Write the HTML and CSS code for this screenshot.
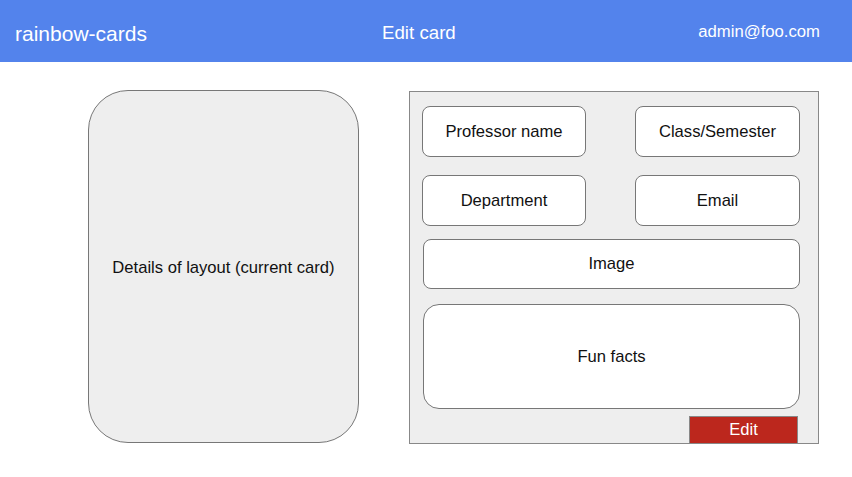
FILE: index.html
```html
<!DOCTYPE html>
<html>
<head>
<meta charset="utf-8">
<title>Edit card</title>
<link rel="stylesheet" href="styles.css">
</head>
<body>
<header class="topbar">
  <div class="brand">rainbow-cards</div>
  <div class="title">Edit card</div>
  <div class="user">admin@foo.com</div>
</header>
<main class="main">
  <section class="preview">Details of layout (current card)</section>
  <section class="panel">
    <div class="row row-first">
      <div class="field field-left">Professor name</div>
      <div class="field field-right">Class/Semester</div>
    </div>
    <div class="row row-second">
      <div class="field field-left">Department</div>
      <div class="field field-right">Email</div>
    </div>
    <div class="field field-wide field-image">Image</div>
    <div class="field field-wide field-facts">Fun facts</div>
    <div class="actions"><button class="edit-btn">Edit</button></div>
  </section>
</main>
</body>
</html>
```
FILE: styles.css
```css
* { box-sizing: border-box; }
html, body { margin: 0; padding: 0; background: #fff; }
body { font-family: "Liberation Sans", Arial, sans-serif; color: #111; }

.topbar {
  height: 62px;
  background: #5383ec;
  color: #fff;
  display: flex;
  align-items: center;
  position: relative;
}
.brand { font-size: 21px; margin-left: 15px; margin-top: 6px; }
.title { font-size: 18.7px; position: absolute; left: 382px; top: 22px; }
.user { font-size: 16.7px; margin-left: auto; margin-right: 32px; margin-top: 1px; }

.main {
  display: flex;
  align-items: flex-start;
  padding-top: 28px;
  padding-left: 88px;
}
.preview {
  width: 271px;
  height: 353px;
  background: #eeeeee;
  border: 1px solid #777;
  border-radius: 40px;
  display: flex;
  align-items: center;
  justify-content: center;
  font-size: 16.6px;
  padding-top: 2px;
}
.panel {
  margin-left: 50px;
  margin-top: 1px;
  width: 410px;
  height: 353px;
  background: #eeeeee;
  border: 1px solid #888;
  display: flex;
  flex-direction: column;
  padding: 14px 18px 0 12px;
}
.row { display: flex; justify-content: space-between; }
.row-second { margin-top: 18px; }
.field {
  background: #fff;
  border: 1px solid #777;
  border-radius: 8px;
  display: flex;
  align-items: center;
  justify-content: center;
  font-size: 16.6px;
  height: 51px;
  padding-top: 1px;
}
.field-left { width: 164px; }
.field-right { width: 165px; }
.field-wide { margin-left: 1px; }
.field-image { margin-top: 13px; height: 50px; }
.field-facts { margin-top: 15px; height: 106px; border-radius: 16px; }
.actions { display: flex; justify-content: flex-end; margin-top: 7px; margin-right: 2px; }
.edit-btn {
  width: 109px;
  height: 27px;
  background: #bc271d;
  color: #fff;
  border: 1px solid #888;
  border-bottom: none;
  font-family: "Liberation Sans", Arial, sans-serif;
  font-size: 16.6px;
  padding: 0;
}
```
